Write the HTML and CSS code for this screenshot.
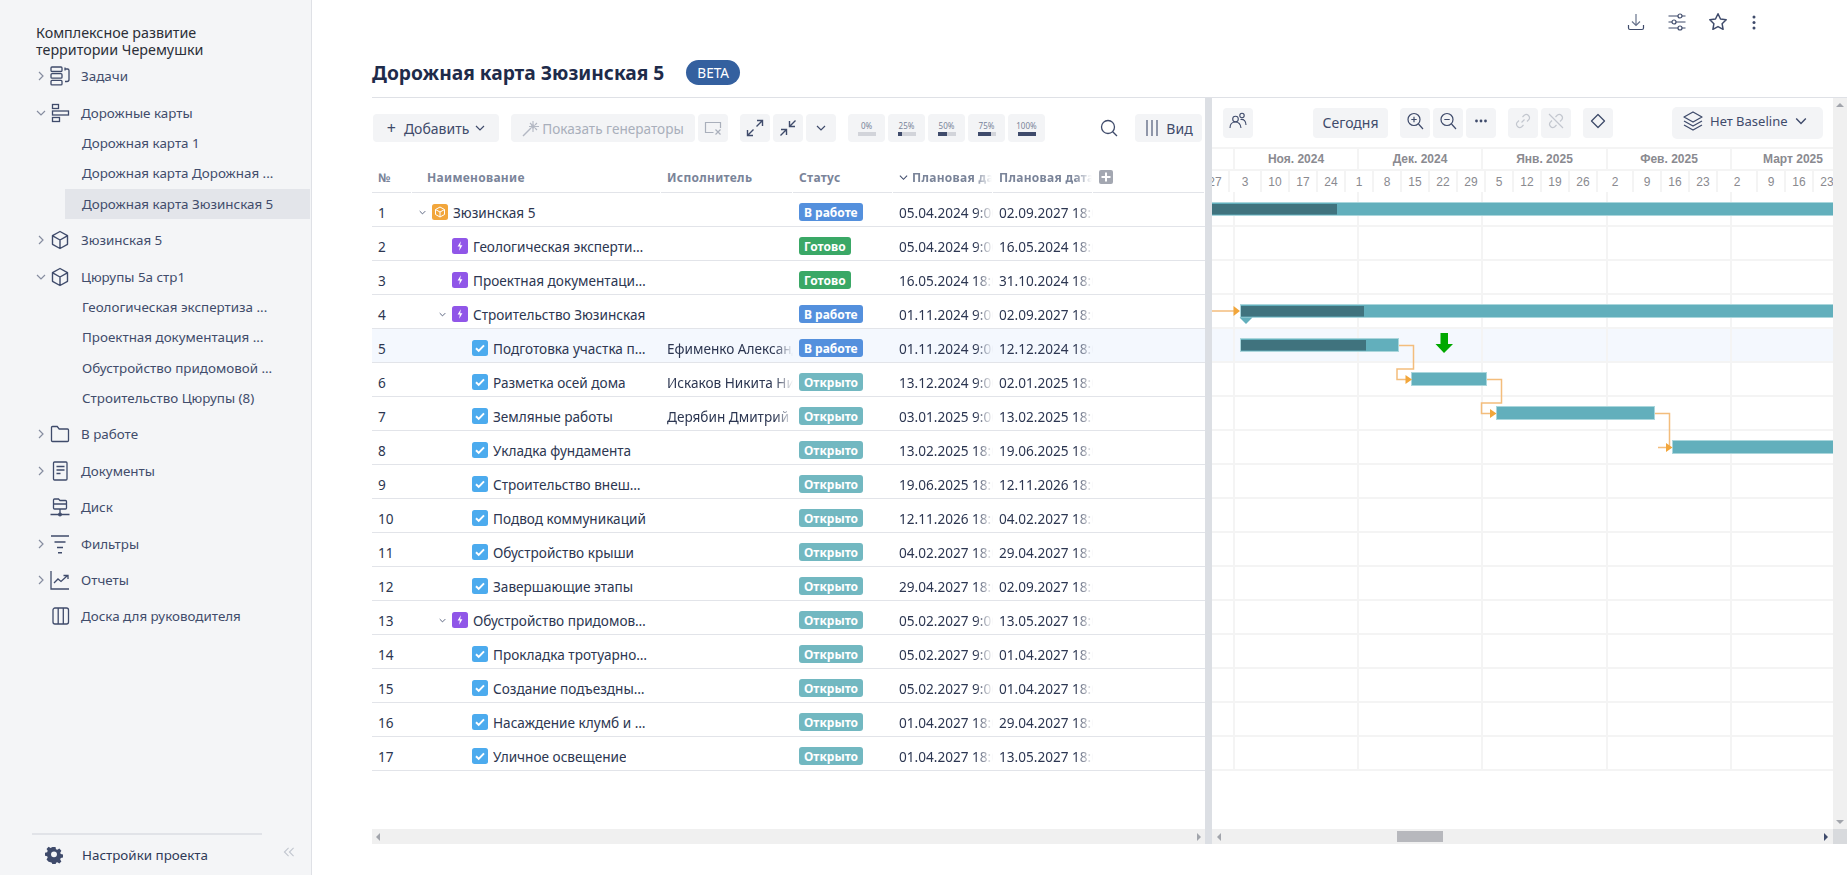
FILE: index.html
```html
<!DOCTYPE html>
<html lang="ru">
<head>
    <meta charset="UTF-8">
    <meta name="viewport" content="width=device-width, initial-scale=1.0">
    <title>Дорожная карта Зюзинская 5</title>
    <link rel="stylesheet" href="styles.css">
</head>
<body>
    <svg class="sprite" width="0" height="0">
        <symbol id="ic-right" viewBox="0 0 10 10"><path d="M3 1l4 4-4 4" fill="none" stroke="currentColor" stroke-width="1.2"/></symbol>
        <symbol id="ic-down" viewBox="0 0 10 10"><path d="M1 3l4 4 4-4" fill="none" stroke="currentColor" stroke-width="1.2"/></symbol>
        <symbol id="ic-cube" viewBox="0 0 20 20"><path d="M10 1.5l7.5 4.2v8.6L10 18.5l-7.5-4.2V5.7zM2.7 5.8L10 10l7.3-4.2M10 10v8.4" fill="none" stroke="currentColor" stroke-width="1.4" stroke-linejoin="round"/></symbol>
        <symbol id="ic-cube-tile" viewBox="0 0 16 16"><rect width="16" height="16" rx="2.5" fill="#f2a63b"/><path d="M8 3l4.5 2.5v5L8 13l-4.5-2.5v-5zM3.6 5.6L8 8l4.4-2.4M8 8v5" fill="none" stroke="#fff" stroke-width="1"/></symbol>
        <symbol id="ic-bolt-tile" viewBox="0 0 16 16"><rect width="16" height="16" rx="2.5" fill="#9056e8"/><path d="M8.8 3.2L5.6 8.6h2.2l-.6 4.2 3.2-5.6H8.2z" fill="#fff"/></symbol>
        <symbol id="ic-check-tile" viewBox="0 0 16 16"><rect width="16" height="16" rx="2.5" fill="#4cabee"/><path d="M4 8.3l2.7 2.6L12 5.4" fill="none" stroke="#fff" stroke-width="2"/></symbol>
    </svg>

    <aside class="sidebar">
        <div class="project-name">Комплексное развитие<br>территории Черемушки</div>
        <nav class="nav">
            <div class="nav-item">
                <svg class="nav-chev"><use href="#ic-right"/></svg>
                <svg class="nav-icon" viewBox="0 0 20 20" fill="none" stroke="currentColor" stroke-width="1.3"><rect x="1" y="1" width="11" height="4.5" rx="1"/><rect x="1" y="7.7" width="11" height="4.5" rx="1"/><rect x="1" y="14.4" width="11" height="4.5" rx="1"/><path d="M15 3h2.5a1.5 1.5 0 0 1 1.500 1.500v9a2 2 0 0 1-2 2H15M15 1.500L15 4.500"/></svg>
                <span>Задачи</span>
            </div>
            <div class="nav-item">
                <svg class="nav-chev"><use href="#ic-down"/></svg>
                <svg class="nav-icon" viewBox="0 0 20 20" fill="none" stroke="currentColor" stroke-width="1.3"><rect x="2.500" y="1.500" width="6" height="4"/><rect x="2.500" y="8" width="16" height="4"/><rect x="2.500" y="14.500" width="7" height="4"/></svg>
                <span>Дорожные карты</span>
            </div>
            <div class="nav-sub">
                <a class="sub-item">Дорожная карта 1</a>
                <a class="sub-item">Дорожная карта Дорожная ...</a>
                <a class="sub-item is-current">Дорожная карта Зюзинская 5</a>
            </div>
            <div class="nav-item">
                <svg class="nav-chev"><use href="#ic-right"/></svg>
                <svg class="nav-icon"><use href="#ic-cube"/></svg>
                <span>Зюзинская 5</span>
            </div>
            <div class="nav-item">
                <svg class="nav-chev"><use href="#ic-down"/></svg>
                <svg class="nav-icon"><use href="#ic-cube"/></svg>
                <span>Цюрупы 5а стр1</span>
            </div>
            <div class="nav-sub">
                <a class="sub-item">Геологическая экспертиза ...</a>
                <a class="sub-item">Проектная документация ...</a>
                <a class="sub-item">Обустройство придомовой ...</a>
                <a class="sub-item">Строительство Цюрупы (8)</a>
            </div>
            <div class="nav-item">
                <svg class="nav-chev"><use href="#ic-right"/></svg>
                <svg class="nav-icon" viewBox="0 0 20 20" fill="none" stroke="currentColor" stroke-width="1.3"><path d="M1.500 3.500a1 1 0 0 1 1-1h4.700l2 2.500h8.300a1 1 0 0 1 1 1v10.500a1 1 0 0 1-1 1h-15a1 1 0 0 1-1-1z"/></svg>
                <span>В работе</span>
            </div>
            <div class="nav-item">
                <svg class="nav-chev"><use href="#ic-right"/></svg>
                <svg class="nav-icon" viewBox="0 0 20 20" fill="none" stroke="currentColor" stroke-width="1.3"><rect x="3.500" y="1" width="13.500" height="18" rx="1"/><path d="M6.500 5.500h8M6.500 9h8M6.500 12.500h4"/></svg>
                <span>Документы</span>
            </div>
            <div class="nav-item">
                <span class="nav-chev"></span>
                <svg class="nav-icon" viewBox="0 0 20 20" fill="none" stroke="currentColor" stroke-width="1.3"><path d="M3.500 3a1 1 0 0 1 1-1h4l1.500 1.500h5.500a1 1 0 0 1 1 1V11a1 1 0 0 1-1 1h-11a1 1 0 0 1-1-1zM3.500 7h13.500M10 12v4M0.500 17.500h19"/><circle cx="10" cy="17.500" r="1.300"/></svg>
                <span>Диск</span>
            </div>
            <div class="nav-item">
                <svg class="nav-chev"><use href="#ic-right"/></svg>
                <svg class="nav-icon" viewBox="0 0 20 20" fill="none" stroke="currentColor" stroke-width="1.4"><path d="M1 2h18M4.500 8h11M7 13.500h6M8 18.800h4"/></svg>
                <span>Фильтры</span>
            </div>
            <div class="nav-item">
                <svg class="nav-chev"><use href="#ic-right"/></svg>
                <svg class="nav-icon" viewBox="0 0 20 20" fill="none" stroke="currentColor" stroke-width="1.3"><path d="M1 1v18h18M4 13l4-4 3 2.500 6-5.500M13.500 5.500H18V9"/></svg>
                <span>Отчеты</span>
            </div>
            <div class="nav-item">
                <span class="nav-chev"></span>
                <svg class="nav-icon" viewBox="0 0 20 20" fill="none" stroke="currentColor" stroke-width="1.3"><rect x="3" y="2" width="15.500" height="16" rx="2"/><path d="M8.200 2v16M13.300 2v16"/></svg>
                <span>Доска для руководителя</span>
            </div>
        </nav>
        <div class="side-foot">
            <div class="side-settings">
                <svg class="gear" viewBox="0 0 20 20"><path fill-rule="evenodd" d="M8.300 1h3.400l.5 2.500 1.500.7 2.200-1.300 2.300 2.400-1.300 2.100.6 1.600 2.500.5v3.300l-2.500.6-.6 1.500 1.300 2.200-2.300 2.300-2.200-1.300-1.500.6-.5 2.500H8.300l-.6-2.500-1.500-.6L4 17.400l-2.300-2.300L3 12.900l-.6-1.500L0 10.800V7.500l2.400-.5.600-1.600-1.300-2.100L4 .9l2.200 1.300 1.500-.7zM10 6a3.300 3.300 0 1 0 0 6.600A3.300 3.300 0 0 0 10 6z" fill="#3f4b6b"/></svg>
                <span>Настройки проекта</span>
            </div>
            <svg class="collapse" viewBox="0 0 14 12" fill="none" stroke="#c2c6cf" stroke-width="1.300"><path d="M6.500 1L1.500 6l5 5M12.500 1l-5 5 5 5"/></svg>
        </div>
    </aside>

    <main class="main">
        <div class="top-actions">
            <svg class="top-icon" viewBox="0 0 20 20" fill="none" stroke="#3f4b6b" stroke-width="1.200"><path d="M10 2v11M6 9.500l4 4 4-4" stroke="#68738c"/><path d="M2.500 13v3a1.500 1.500 0 0 0 1.500 1.500h12a1.500 1.500 0 0 0 1.500-1.500v-3"/></svg>
            <svg class="top-icon" viewBox="0 0 20 20" fill="none" stroke="#3f4b6b" stroke-width="1.200"><path d="M1.500 4h9.500M15 4h3.500M1.500 10h3.500M9 10h9.500M1.500 16h9.500M15 16h3.500"/><circle cx="13" cy="4" r="2"/><circle cx="7" cy="10" r="2"/><circle cx="13" cy="16" r="2"/></svg>
            <svg class="top-icon" viewBox="0 0 20 20" fill="none" stroke="#3f4b6b" stroke-width="1.500" stroke-linejoin="round"><path d="M10 1.800l2.500 5.200 5.700.8-4.100 3.900 1 5.600L10 14.600l-5.100 2.700 1-5.600-4.100-3.900 5.700-.8z"/></svg>
            <svg class="top-icon top-dots" viewBox="0 0 4 20" fill="#3f4b6b"><circle cx="2" cy="5" r="1.500"/><circle cx="2" cy="10.500" r="1.500"/><circle cx="2" cy="16" r="1.500"/></svg>
        </div>
        <div class="title-row">
            <h1>Дорожная карта Зюзинская 5</h1>
            <span class="beta">BETA</span>
        </div>

        <div class="workspace">
            <section class="panel">
                <div class="toolbar">
                    <button class="btn btn-add"><span class="plus">+</span> Добавить
                        <svg class="chev-s"><use href="#ic-down"/></svg>
                    </button>
                    <button class="btn btn-gen group-start">
                        <svg class="ic18" viewBox="0 0 18 18" fill="none" stroke="#b3b8c3" stroke-width="1.100"><path d="M1 17l8-8" stroke-width="1.400"/><path d="M11 2v4M11 9v4M7 7.500h2.500M13 7.500h4M8 4l2 2M15 4l-2 2M15 11l-2-2"/><circle cx="11" cy="7.500" r="1.500" fill="#b3b8c3"/></svg>
                        Показать генераторы
                    </button>
                    <button class="btn btn-sq">
                        <svg class="ic18" viewBox="0 0 18 18" fill="none" stroke="#a9afbb" stroke-width="1.200"><path d="M16.500 9V3.500h-15v10h8M11.500 10.500l5 5M16.500 10.500l-5 5"/></svg>
                    </button>
                    <button class="btn btn-sq group-start">
                        <svg class="ic18" viewBox="0 0 18 18" fill="none" stroke="#3f4b6b" stroke-width="1.400"><path d="M10.500 7.500L16 2M11 1.500h5.500V7M7.500 10.500L2 16M7 16.500H1.500V11"/></svg>
                    </button>
                    <button class="btn btn-sq">
                        <svg class="ic18" viewBox="0 0 18 18" fill="none" stroke="#3f4b6b" stroke-width="1.400"><path d="M16.500 1.500L11 7M10.500 2v5.500H16M1.500 16.500L7 11M7.500 16v-5.500H2"/></svg>
                    </button>
                    <button class="btn btn-sq">
                        <svg class="chev-s"><use href="#ic-down"/></svg>
                    </button>
                    <button class="btn btn-pct group-start"><span>0%</span><i class="pct-bar"></i></button>
                    <button class="btn btn-pct"><span>25%</span><i class="pct-bar"><b class="fill-25"></b></i></button>
                    <button class="btn btn-pct"><span>50%</span><i class="pct-bar"><b class="fill-50"></b></i></button>
                    <button class="btn btn-pct"><span>75%</span><i class="pct-bar"><b class="fill-75"></b></i></button>
                    <button class="btn btn-pct"><span>100%</span><i class="pct-bar"><b class="fill-100"></b></i></button>
                    <svg class="search" viewBox="0 0 18 18" fill="none" stroke="#3f4b6b" stroke-width="1.300"><circle cx="8" cy="8" r="6.500"/><path d="M12.700 12.700L17 17"/></svg>
                    <button class="btn btn-view">
                        <svg class="ic16" viewBox="0 0 14 16" fill="none" stroke="#3f4b6b" stroke-width="1.100"><path d="M2 0v16M7 0v16M12 0v16"/></svg>
                        Вид
                    </button>
                </div>

                <div class="table">
                    <div class="thead">
                        <div class="th">№</div>
                        <div class="th th-name">Наименование</div>
                        <div class="th">Исполнитель</div>
                        <div class="th">Статус</div>
                        <div class="th th-sort"><svg class="chev-sort"><use href="#ic-down"/></svg><span class="fade">Плановая дата начала</span></div>
                        <div class="th"><span class="fade">Плановая дата окончания</span></div>
                        <div class="th"><svg class="add-col" viewBox="0 0 14 14"><rect width="14" height="14" rx="2" fill="#a3a7b1"/><path d="M7 2.500v9M2.500 7h9" stroke="#fff" stroke-width="2"/></svg></div>
                    </div>

                    <div class="tr">
                        <div class="td">1</div>
                        <div class="td td-name"><svg class="tree"><use href="#ic-down"/></svg><svg class="tile"><use href="#ic-cube-tile"/></svg><span class="name">Зюзинская 5</span></div>
                        <div class="td"></div>
                        <div class="td"><span class="tag tag-work">В работе</span></div>
                        <div class="td"><span class="fade">05.04.2024 9:00</span></div>
                        <div class="td"><span class="fade">02.09.2027 18:00</span></div>
                    </div>
                    <div class="tr">
                        <div class="td">2</div>
                        <div class="td td-name lvl-1"><span class="tree"></span><svg class="tile"><use href="#ic-bolt-tile"/></svg><span class="name">Геологическая эксперти…</span></div>
                        <div class="td"></div>
                        <div class="td"><span class="tag tag-done">Готово</span></div>
                        <div class="td"><span class="fade">05.04.2024 9:00</span></div>
                        <div class="td"><span class="fade">16.05.2024 18:00</span></div>
                    </div>
                    <div class="tr">
                        <div class="td">3</div>
                        <div class="td td-name lvl-1"><span class="tree"></span><svg class="tile"><use href="#ic-bolt-tile"/></svg><span class="name">Проектная документаци…</span></div>
                        <div class="td"></div>
                        <div class="td"><span class="tag tag-done">Готово</span></div>
                        <div class="td"><span class="fade">16.05.2024 18:00</span></div>
                        <div class="td"><span class="fade">31.10.2024 18:00</span></div>
                    </div>
                    <div class="tr">
                        <div class="td">4</div>
                        <div class="td td-name lvl-1"><svg class="tree"><use href="#ic-down"/></svg><svg class="tile"><use href="#ic-bolt-tile"/></svg><span class="name">Строительство Зюзинская</span></div>
                        <div class="td"></div>
                        <div class="td"><span class="tag tag-work">В работе</span></div>
                        <div class="td"><span class="fade">01.11.2024 9:00</span></div>
                        <div class="td"><span class="fade">02.09.2027 18:00</span></div>
                    </div>
                    <div class="tr is-active">
                        <div class="td">5</div>
                        <div class="td td-name lvl-2"><span class="tree"></span><svg class="tile"><use href="#ic-check-tile"/></svg><span class="name">Подготовка участка п…</span></div>
                        <div class="td"><span class="fade">Ефименко Александр</span></div>
                        <div class="td"><span class="tag tag-work">В работе</span></div>
                        <div class="td"><span class="fade">01.11.2024 9:00</span></div>
                        <div class="td"><span class="fade">12.12.2024 18:00</span></div>
                    </div>
                    <div class="tr">
                        <div class="td">6</div>
                        <div class="td td-name lvl-2"><span class="tree"></span><svg class="tile"><use href="#ic-check-tile"/></svg><span class="name">Разметка осей дома</span></div>
                        <div class="td"><span class="fade">Искаков Никита Николаевич</span></div>
                        <div class="td"><span class="tag tag-open">Открыто</span></div>
                        <div class="td"><span class="fade">13.12.2024 9:00</span></div>
                        <div class="td"><span class="fade">02.01.2025 18:00</span></div>
                    </div>
                    <div class="tr">
                        <div class="td">7</div>
                        <div class="td td-name lvl-2"><span class="tree"></span><svg class="tile"><use href="#ic-check-tile"/></svg><span class="name">Земляные работы</span></div>
                        <div class="td"><span class="fade">Дерябин Дмитрий</span></div>
                        <div class="td"><span class="tag tag-open">Открыто</span></div>
                        <div class="td"><span class="fade">03.01.2025 9:00</span></div>
                        <div class="td"><span class="fade">13.02.2025 18:00</span></div>
                    </div>
                    <div class="tr">
                        <div class="td">8</div>
                        <div class="td td-name lvl-2"><span class="tree"></span><svg class="tile"><use href="#ic-check-tile"/></svg><span class="name">Укладка фундамента</span></div>
                        <div class="td"></div>
                        <div class="td"><span class="tag tag-open">Открыто</span></div>
                        <div class="td"><span class="fade">13.02.2025 18:00</span></div>
                        <div class="td"><span class="fade">19.06.2025 18:00</span></div>
                    </div>
                    <div class="tr">
                        <div class="td">9</div>
                        <div class="td td-name lvl-2"><span class="tree"></span><svg class="tile"><use href="#ic-check-tile"/></svg><span class="name">Строительство внеш…</span></div>
                        <div class="td"></div>
                        <div class="td"><span class="tag tag-open">Открыто</span></div>
                        <div class="td"><span class="fade">19.06.2025 18:00</span></div>
                        <div class="td"><span class="fade">12.11.2026 18:00</span></div>
                    </div>
                    <div class="tr">
                        <div class="td">10</div>
                        <div class="td td-name lvl-2"><span class="tree"></span><svg class="tile"><use href="#ic-check-tile"/></svg><span class="name">Подвод коммуникаций</span></div>
                        <div class="td"></div>
                        <div class="td"><span class="tag tag-open">Открыто</span></div>
                        <div class="td"><span class="fade">12.11.2026 18:00</span></div>
                        <div class="td"><span class="fade">04.02.2027 18:00</span></div>
                    </div>
                    <div class="tr">
                        <div class="td">11</div>
                        <div class="td td-name lvl-2"><span class="tree"></span><svg class="tile"><use href="#ic-check-tile"/></svg><span class="name">Обустройство крыши</span></div>
                        <div class="td"></div>
                        <div class="td"><span class="tag tag-open">Открыто</span></div>
                        <div class="td"><span class="fade">04.02.2027 18:00</span></div>
                        <div class="td"><span class="fade">29.04.2027 18:00</span></div>
                    </div>
                    <div class="tr">
                        <div class="td">12</div>
                        <div class="td td-name lvl-2"><span class="tree"></span><svg class="tile"><use href="#ic-check-tile"/></svg><span class="name">Завершающие этапы</span></div>
                        <div class="td"></div>
                        <div class="td"><span class="tag tag-open">Открыто</span></div>
                        <div class="td"><span class="fade">29.04.2027 18:00</span></div>
                        <div class="td"><span class="fade">02.09.2027 18:00</span></div>
                    </div>
                    <div class="tr">
                        <div class="td">13</div>
                        <div class="td td-name lvl-1"><svg class="tree"><use href="#ic-down"/></svg><svg class="tile"><use href="#ic-bolt-tile"/></svg><span class="name">Обустройство придомов…</span></div>
                        <div class="td"></div>
                        <div class="td"><span class="tag tag-open">Открыто</span></div>
                        <div class="td"><span class="fade">05.02.2027 9:00</span></div>
                        <div class="td"><span class="fade">13.05.2027 18:00</span></div>
                    </div>
                    <div class="tr">
                        <div class="td">14</div>
                        <div class="td td-name lvl-2"><span class="tree"></span><svg class="tile"><use href="#ic-check-tile"/></svg><span class="name">Прокладка тротуарно…</span></div>
                        <div class="td"></div>
                        <div class="td"><span class="tag tag-open">Открыто</span></div>
                        <div class="td"><span class="fade">05.02.2027 9:00</span></div>
                        <div class="td"><span class="fade">01.04.2027 18:00</span></div>
                    </div>
                    <div class="tr">
                        <div class="td">15</div>
                        <div class="td td-name lvl-2"><span class="tree"></span><svg class="tile"><use href="#ic-check-tile"/></svg><span class="name">Создание подъездны…</span></div>
                        <div class="td"></div>
                        <div class="td"><span class="tag tag-open">Открыто</span></div>
                        <div class="td"><span class="fade">05.02.2027 9:00</span></div>
                        <div class="td"><span class="fade">01.04.2027 18:00</span></div>
                    </div>
                    <div class="tr">
                        <div class="td">16</div>
                        <div class="td td-name lvl-2"><span class="tree"></span><svg class="tile"><use href="#ic-check-tile"/></svg><span class="name">Насаждение клумб и …</span></div>
                        <div class="td"></div>
                        <div class="td"><span class="tag tag-open">Открыто</span></div>
                        <div class="td"><span class="fade">01.04.2027 18:00</span></div>
                        <div class="td"><span class="fade">29.04.2027 18:00</span></div>
                    </div>
                    <div class="tr">
                        <div class="td">17</div>
                        <div class="td td-name lvl-2"><span class="tree"></span><svg class="tile"><use href="#ic-check-tile"/></svg><span class="name">Уличное освещение</span></div>
                        <div class="td"></div>
                        <div class="td"><span class="tag tag-open">Открыто</span></div>
                        <div class="td"><span class="fade">01.04.2027 18:00</span></div>
                        <div class="td"><span class="fade">13.05.2027 18:00</span></div>
                    </div>
                </div>

                <div class="hscroll">
                    <i class="arrow arrow-left"></i>
                    <i class="arrow arrow-right arrow-end"></i>
                </div>
            </section>

            <div class="splitter"></div>

            <section class="gantt">
                <div class="gantt-main">
                    <div class="gantt-view">
                        <div class="gantt-tools">
                            <button class="btn btn-tool">
                                <svg class="ic18" viewBox="0 0 18 18" fill="none" stroke="#3f4b6b" stroke-width="1.100"><circle cx="6.500" cy="7" r="2.800"/><circle cx="13" cy="3.500" r="2.200"/><path d="M1 16c0-4 2-6 5.500-6s5 2 5.500 6M11.500 7.500c3.500-.5 5.500 1.500 5.500 5.500"/></svg>
                            </button>
                            <button class="btn btn-today">Сегодня</button>
                            <button class="btn btn-tool group-start">
                                <svg class="ic18" viewBox="0 0 18 18" fill="none" stroke="#3f4b6b" stroke-width="1.200"><circle cx="8" cy="7.500" r="6"/><path d="M12.500 12l4.500 5M8 4.800v5.400M5.300 7.500h5.400"/></svg>
                            </button>
                            <button class="btn btn-tool">
                                <svg class="ic18" viewBox="0 0 18 18" fill="none" stroke="#3f4b6b" stroke-width="1.200"><circle cx="8" cy="7.500" r="6"/><path d="M12.500 12l4.500 5M5.300 7.500h5.400"/></svg>
                            </button>
                            <button class="btn btn-tool">
                                <svg class="ic18" viewBox="0 0 18 18" fill="#3f4b6b"><circle cx="4.500" cy="9" r="1.400"/><circle cx="9" cy="9" r="1.400"/><circle cx="13.500" cy="9" r="1.400"/></svg>
                            </button>
                            <button class="btn btn-tool group-start">
                                <svg class="ic18" viewBox="0 0 18 18" fill="none" stroke="#c3c7cf" stroke-width="1.200"><path d="M7.500 10.500l3-3M8.500 5l2-2a3.300 3.300 0 0 1 4.500 4.500l-2 2M9.500 13l-2 2A3.300 3.300 0 0 1 3 10.500l2-2"/></svg>
                            </button>
                            <button class="btn btn-tool">
                                <svg class="ic18" viewBox="0 0 18 18" fill="none" stroke="#c3c7cf" stroke-width="1.200"><path d="M8.500 5l2-2a3.300 3.300 0 0 1 4.500 4.500l-2 2M9.500 13l-2 2A3.300 3.300 0 0 1 3 10.500l2-2M2 2l14 14"/></svg>
                            </button>
                            <button class="btn btn-tool group-start">
                                <svg class="ic18" viewBox="0 0 18 18" fill="none" stroke="#3f4b6b" stroke-width="1.300"><path d="M9 2.500L15.500 9 9 15.500 2.500 9z" stroke-linejoin="round"/></svg>
                            </button>
                            <button class="btn btn-baseline">
                                <svg class="ic20" viewBox="0 0 20 20" fill="none" stroke="#3f4b6b" stroke-width="1.300" stroke-linejoin="round"><path d="M10 1l9 5-9 5-9-5zM1 10l9 5 9-5M1 14l9 5 9-5"/></svg>
                                Нет Baseline
                                <svg class="chev-m"><use href="#ic-down"/></svg>
                            </button>
                        </div>

                        <div class="months">
                            <div class="month month-stub"></div>
                            <div class="month">Ноя. 2024</div>
                            <div class="month">Дек. 2024</div>
                            <div class="month month-long">Янв. 2025</div>
                            <div class="month">Фев. 2025</div>
                            <div class="month">Март 2025</div>
                        </div>
                        <div class="days">
                            <div class="day day-first">27</div>
                            <div class="day day-32">3</div>
                            <div class="day">10</div>
                            <div class="day">17</div>
                            <div class="day">24</div>
                            <div class="day">1</div>
                            <div class="day">8</div>
                            <div class="day">15</div>
                            <div class="day">22</div>
                            <div class="day">29</div>
                            <div class="day">5</div>
                            <div class="day">12</div>
                            <div class="day">19</div>
                            <div class="day">26</div>
                            <div class="day day-36">2</div>
                            <div class="day">9</div>
                            <div class="day">16</div>
                            <div class="day">23</div>
                            <div class="day day-40">2</div>
                            <div class="day">9</div>
                            <div class="day">16</div>
                            <div class="day">23</div>
                        </div>

                        <svg class="chart" viewBox="1212 192 621 637">
                            <rect class="row-hl" x="1212" y="328" width="621" height="34"/>
                            <path class="grid" d="M1212 226h621M1212 260h621M1212 294h621M1212 328h621M1212 362h621M1212 396h621M1212 430h621M1212 464h621M1212 498h621M1212 532h621M1212 566h621M1212 600h621M1212 634h621M1212 668h621M1212 702h621M1212 736h621M1212 770h621"/>
                            <path class="grid" d="M1234 192v578M1358 192v578M1482 192v578M1607 192v578M1731 192v578"/>

                            <rect class="bar" x="1205" y="202.500" width="640" height="13"/>
                            <rect class="bar-done" x="1205" y="204" width="132" height="10.500"/>

                            <rect class="bar" x="1240.500" y="304.500" width="600" height="13"/>
                            <rect class="bar-done" x="1241" y="306" width="123" height="10.500"/>
                            <path class="bar-tip" d="M1239.500 317.500h13l-6.500 6.500z"/>

                            <rect class="bar" x="1240.500" y="338.500" width="158" height="13"/>
                            <rect class="bar-done" x="1241" y="340" width="125" height="10.500"/>
                            <rect class="bar" x="1411.500" y="372.500" width="75" height="13"/>
                            <rect class="bar" x="1496.500" y="406.500" width="158" height="13"/>
                            <rect class="bar" x="1672.500" y="440.500" width="170" height="13"/>

                            <path class="link" d="M1212 311h22"/>
                            <path class="link" d="M1399 345.500h14.500v23.500h-16.500v10.500h9"/>
                            <path class="link" d="M1487 379.500h14.500v23.500h-20v10.500h9"/>
                            <path class="link" d="M1655 413.500h14.500v33.500M1658 447.500h9"/>
                            <path class="link-head" d="M1233.500 306l6.500 5-6.500 5zM1405.500 375l6.500 4.500-6.500 4.500zM1490 409l6.500 4.500-6.500 4.500zM1666 443l6.500 4.500-6.500 4.500z"/>

                            <path class="marker" d="M1440.500 333h7.500v11h5l-9 9-8.500-9h5z"/>
                        </svg>
                    </div>
                    <div class="vscroll">
                        <i class="arrow arrow-up"></i>
                        <i class="arrow arrow-dn"></i>
                    </div>
                </div>
                <div class="hscroll hscroll-gantt">
                    <i class="arrow arrow-left"></i>
                    <i class="thumb"></i>
                    <i class="arrow arrow-right arrow-dark"></i>
                    <i class="corner"></i>
                </div>
            </section>
        </div>
    </main>
</body>
</html>
```

FILE: styles.css
```css
* {
    box-sizing: border-box;
}

body {
    margin: 0;
    height: 100vh;
    display: flex;
    overflow: hidden;
    background-color: #fff;
    color: #2c3651;
    font-family: "Noto Sans", sans-serif;
    font-size: 13.6px;
}

.sprite {
    position: absolute;
}

.btn {
    display: flex;
    align-items: center;
    justify-content: center;
    height: 28px;
    padding: 0;
    border: none;
    border-radius: 4px;
    background-color: #f3f4f6;
    color: #3f4b6b;
    font-family: inherit;
    font-size: 13.6px;
    white-space: nowrap;
}

.group-start {
    margin-left: 9px;
}

.ic16 {
    width: 16px;
    height: 16px;
}

.ic18 {
    width: 18px;
    height: 18px;
}

.ic20 {
    width: 20px;
    height: 20px;
}

.chev-s {
    width: 10px;
    height: 10px;
}

.chev-m {
    width: 12px;
    height: 12px;
}

/* sidebar */
.sidebar {
    width: 312px;
    flex-shrink: 0;
    display: flex;
    flex-direction: column;
    background-color: #f4f5f7;
    border-right: 1px solid #dfe1e6;
    color: #414c6b;
    font-size: 13.4px;
}

.project-name {
    padding: 24px 0 0 36px;
    height: 58px;
    color: #2b2f38;
    font-size: 14.3px;
    line-height: 17px;
}

.nav {
    flex: 1;
}

.nav-item {
    display: flex;
    align-items: center;
    height: 36.4px;
    padding-left: 36px;
}

.nav-chev {
    width: 10px;
    height: 10px;
    color: #868da0;
    flex-shrink: 0;
}

.nav-icon {
    width: 20px;
    height: 20px;
    margin: 0 11px 0 4px;
    flex-shrink: 0;
    color: #3f4b6b;
}

.nav-sub {
    margin: -3px 0 3px 65px;
}

.sub-item {
    display: flex;
    align-items: center;
    height: 30.4px;
    margin-right: 1px;
    padding-left: 17px;
}

.sub-item.is-current {
    background-color: #e3e5ea;
}

.side-foot {
    display: flex;
    align-items: center;
    margin-left: 32px;
}

.side-settings {
    display: flex;
    align-items: center;
    width: 230px;
    height: 42px;
    padding-left: 13px;
    border-top: 2px solid #e1e3e8;
    color: #2f3a58;
}

.gear {
    width: 18px;
    height: 18px;
    margin-right: 19px;
}

.collapse {
    width: 12px;
    height: 10px;
    margin: -4px 0 0 21px;
}

/* main area */
.main {
    flex: 1;
    min-width: 0;
    display: flex;
    flex-direction: column;
}

.top-actions {
    display: flex;
    justify-content: flex-end;
    align-items: center;
    gap: 21px;
    height: 44px;
    padding-right: 91px;
}

.top-icon {
    width: 20px;
    height: 20px;
}

.top-dots {
    width: 4px;
    margin-left: 3px;
}

.title-row {
    display: flex;
    align-items: center;
    height: 54px;
    margin-left: 60px;
    padding-top: 4px;
    border-bottom: 1px solid #dfe1e6;
}

h1 {
    margin: 0;
    color: #1e2b4a;
    font-size: 19.2px;
    font-weight: 700;
}

.beta {
    display: flex;
    align-items: center;
    height: 25px;
    margin-left: 22px;
    padding: 0 11px;
    border-radius: 13px;
    background-color: #34609f;
    color: #fff;
    font-size: 13.6px;
}

.workspace {
    flex: 1;
    min-height: 0;
    display: flex;
    margin-left: 60px;
    padding-bottom: 31px;
}

.panel {
    width: 833px;
    flex-shrink: 0;
    display: flex;
    flex-direction: column;
}

.splitter {
    width: 7px;
    flex-shrink: 0;
    background-color: #dcdfe4;
}

/* table toolbar */
.toolbar {
    display: flex;
    align-items: center;
    gap: 3px;
    margin-top: 16px;
    padding: 0 3px 0 1px;
}

.btn-add {
    width: 126px;
    gap: 6px;
    font-size: 14px;
}

.plus {
    font-size: 16px;
    line-height: 1;
    margin-right: 2px;
}

.btn-gen {
    width: 184px;
    gap: 2px;
    color: #a9afbb;
}

.btn-sq {
    width: 30px;
}

.btn-pct {
    width: 37px;
    flex-direction: column;
    gap: 1px;
    color: #7a8499;
    font-size: 8px;
    line-height: 10px;
}

.pct-bar {
    display: block;
    width: 18px;
    height: 4px;
    background-color: #d2d4da;
}

.pct-bar b {
    display: block;
    height: 100%;
    background-color: #3f4b6b;
}

.fill-25 { width: 25%; }
.fill-50 { width: 50%; }
.fill-75 { width: 75%; }
.fill-100 { width: 100%; }

.search {
    width: 18px;
    height: 18px;
    margin-left: auto;
    margin-right: 14px;
}

.btn-view {
    width: 67px;
    gap: 6px;
    font-size: 14px;
}

/* table */
.table {
    flex: 1;
    margin-top: 18px;
}

.thead,
.tr {
    display: grid;
    grid-template-columns: 40px 249px 132px 100px 100px 100px 112px;
}

.thead {
    height: 33px;
    color: #7a8499;
    font-size: 12px;
    font-weight: 700;
    letter-spacing: 0.3px;
}

.th {
    display: flex;
    align-items: center;
    min-width: 0;
    margin-right: 1px;
    padding: 2px 0 0 6px;
    border-bottom: 1px solid #e2e4e9;
    white-space: nowrap;
}

.th-name {
    padding-left: 15px;
}

.th-sort {
    gap: 4px;
}

.chev-sort {
    width: 9px;
    height: 9px;
    flex-shrink: 0;
    color: #3f4b6b;
}

.add-col {
    width: 14px;
    height: 14px;
}

.fade {
    display: block;
    flex: 1;
    min-width: 0;
    overflow: hidden;
    white-space: nowrap;
    -webkit-mask-image: linear-gradient(to right, #000 calc(100% - 18px), transparent);
    mask-image: linear-gradient(to right, #000 calc(100% - 18px), transparent);
}

.tr {
    height: 34px;
    border-bottom: 1px solid #e2e4e9;
}

.tr.is-active {
    background-color: #f4f8fe;
}

.td {
    display: flex;
    align-items: center;
    min-width: 0;
    padding: 5px 0 0 6px;
    white-space: nowrap;
}

.td-name {
    padding-right: 8px;
}

.lvl-1 {
    padding-left: 26px;
}

.lvl-2 {
    padding-left: 46px;
}

.tree {
    width: 7px;
    height: 7px;
    flex-shrink: 0;
    margin: 0 6px 0 1px;
    color: #3f4b6b;
}

.tile {
    width: 16px;
    height: 16px;
    flex-shrink: 0;
    margin-right: 5px;
}

.name {
    overflow: hidden;
}

.tag {
    display: flex;
    align-items: center;
    height: 18px;
    padding: 0 5px;
    border-radius: 3px;
    color: #fff;
    font-size: 12px;
    font-weight: 700;
}

.tag-work { background-color: #5490dd; }
.tag-done { background-color: #3aa866; }
.tag-open { background-color: #72b8c1; }

/* scrollbars */
.hscroll {
    display: flex;
    align-items: center;
    height: 15px;
    flex-shrink: 0;
    background-color: #f0f0f0;
}

.arrow {
    display: block;
    width: 0;
    height: 0;
    flex-shrink: 0;
    border-style: solid;
    border-color: transparent;
}

.arrow-left {
    margin-left: 4px;
    border-width: 4px 4px 4px 0;
    border-right-color: #a2a5ac;
}

.arrow-right {
    border-width: 4px 0 4px 4px;
    border-left-color: #a2a5ac;
}

.arrow-end {
    margin-left: auto;
    margin-right: 4px;
}

.arrow-dark {
    margin-left: auto;
    margin-right: 5px;
    border-left-color: #3f4b6b;
}

.hscroll-gantt .arrow-left {
    margin-left: 5px;
}

.thumb {
    display: block;
    width: 46px;
    height: 11px;
    margin-left: 176px;
    background-color: #b7b8bd;
}

.corner {
    display: block;
    width: 14px;
    height: 15px;
    background-color: #d8dadd;
}

.vscroll {
    width: 14px;
    flex-shrink: 0;
    display: flex;
    flex-direction: column;
    align-items: center;
    justify-content: space-between;
    padding: 5px 0;
    background-color: #f0f0f0;
}

.arrow-up {
    border-width: 0 4px 4px;
    border-bottom-color: #a2a5ac;
}

.arrow-dn {
    border-width: 4px 4px 0;
    border-top-color: #a2a5ac;
}

/* gantt */
.gantt {
    flex: 1;
    min-width: 0;
    display: flex;
    flex-direction: column;
}

.gantt-main {
    flex: 1;
    min-height: 0;
    display: flex;
}

.gantt-view {
    flex: 1;
    min-width: 0;
    display: flex;
    flex-direction: column;
    overflow: hidden;
}

.gantt-tools {
    display: flex;
    align-items: center;
    gap: 3px;
    height: 49px;
    flex-shrink: 0;
    padding: 0 10px 0 11px;
}

.btn-tool {
    width: 30px;
    height: 30px;
    padding-bottom: 4px;
}

.btn-today {
    width: 75px;
    height: 30px;
    margin-left: 57px;
    font-size: 14px;
}

.btn-baseline {
    width: 151px;
    height: 32px;
    margin-left: auto;
    padding: 0 0 4px 11px;
    justify-content: flex-start;
    gap: 7px;
    border-radius: 5px;
    font-size: 13px;
}

.months {
    display: flex;
    height: 22px;
    flex-shrink: 0;
    color: #8a8a90;
    font-family: "Liberation Sans", sans-serif;
    font-size: 12px;
    font-weight: 700;
}

.month {
    display: flex;
    align-items: center;
    justify-content: center;
    width: 124px;
    flex-shrink: 0;
    border-top: 2px solid #f4f4f4;
    border-right: 2px solid #f4f4f4;
}

.month-stub {
    width: 23px;
}

.month-long {
    width: 125px;
}

.days {
    display: flex;
    height: 23px;
    flex-shrink: 0;
    border-top: 2px solid #f4f4f4;
    color: #8a8a90;
    font-family: "Liberation Sans", sans-serif;
    font-size: 12px;
}

.day {
    display: flex;
    align-items: center;
    justify-content: center;
    width: 28px;
    flex-shrink: 0;
    border-right: 2px solid #f4f4f4;
}

.day-first {
    margin-left: -10px;
}

.day-32 { width: 32px; }
.day-36 { width: 36px; }
.day-40 { width: 40px; }

.chart {
    display: block;
    width: 621px;
    height: 637px;
    flex-shrink: 0;
}

.row-hl {
    fill: #f4f8fe;
}

.grid {
    fill: none;
    stroke: #f4f4f4;
    stroke-width: 2;
}

.bar {
    fill: #62afbc;
    stroke: #aad6dc;
}

.bar-done {
    fill: #40737e;
}

.bar-tip {
    fill: #62afbc;
}

.link {
    fill: none;
    stroke: #f3bd7c;
    stroke-width: 1.5;
}

.link-head {
    fill: #f2a63b;
}

.marker {
    fill: #00a800;
}
```
